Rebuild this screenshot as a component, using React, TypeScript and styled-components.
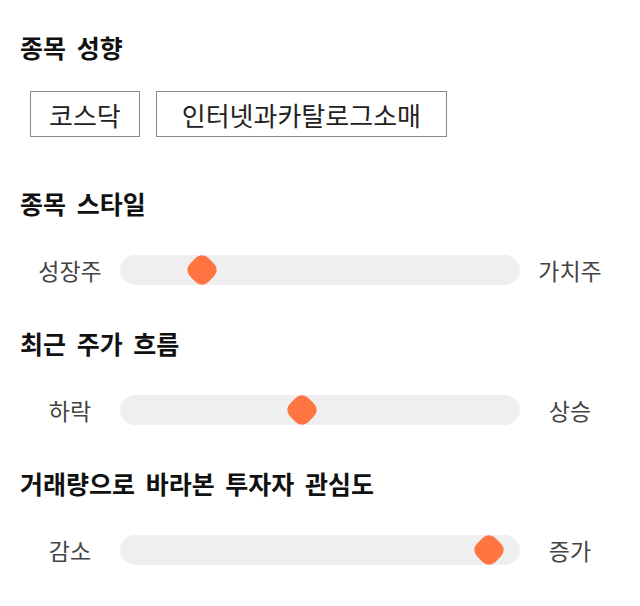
import React from "react";
import styled, { createGlobalStyle } from "styled-components";

const GlobalStyle = createGlobalStyle`
  body {
    margin: 0;
    background: #ffffff;
    font-family: "Noto Sans CJK KR", "Noto Sans", sans-serif;
  }
`;

const Page = styled.div`
  width: 640px;
  padding: 32px 20px 0 20px;
  box-sizing: border-box;
`;

const Section = styled.section<{ $after: number }>`
  margin-bottom: ${(p) => p.$after}px;
`;

const Heading = styled.h2<{ $gap: number }>`
  margin: 0 0 ${(p) => p.$gap}px 0;
  font-size: 25px;
  line-height: 30px;
  font-weight: 700;
  word-spacing: 5px;
  color: #111;
`;

const TagRow = styled.div`
  display: flex;
  gap: 16px;
  padding-left: 10px;
`;

const Tag = styled.button<{ $pad: number }>`
  height: 46px;
  padding: 0 ${(p) => p.$pad}px;
  border: 1px solid #8a8a8a;
  background: #fff;
  font-family: inherit;
  font-size: 26px;
  color: #222;
  box-sizing: border-box;
`;

const SliderRow = styled.div`
  display: grid;
  grid-template-columns: 100px 400px 100px;
  align-items: center;
  height: 30px;
`;

const SideLabel = styled.span`
  text-align: center;
  font-size: 23px;
  color: #444;
  line-height: 30px;
`;

const Track = styled.div`
  position: relative;
  height: 30px;
  border-radius: 15px;
  background: #efefef;
`;

const Thumb = styled.div`
  position: absolute;
  top: 2px;
  width: 26px;
  height: 26px;
  margin-left: -13px;
  background: #ff7541;
  border-radius: 9px;
  transform: rotate(45deg);
`;

type SliderProps = { left: string; right: string; pos: number };

const Slider = ({ left, right, pos }: SliderProps) => (
  <SliderRow>
    <SideLabel>{left}</SideLabel>
    <Track>
      <Thumb style={{ left: `${pos}px` }} />
    </Track>
    <SideLabel>{right}</SideLabel>
  </SliderRow>
);

const App = () => (
  <>
    <GlobalStyle />
    <Page>
      <Section $after={51}>
        <Heading $gap={29}>종목 성향</Heading>
        <TagRow>
          <Tag $pad={18}>코스닥</Tag>
          <Tag $pad={25}>인터넷과카탈로그소매</Tag>
        </TagRow>
      </Section>
      <Section $after={43}>
        <Heading $gap={37}>종목 스타일</Heading>
        <Slider left="성장주" right="가치주" pos={82} />
      </Section>
      <Section $after={43}>
        <Heading $gap={37}>최근 주가 흐름</Heading>
        <Slider left="하락" right="상승" pos={182} />
      </Section>
      <Section $after={0}>
        <Heading $gap={37}>거래량으로 바라본 투자자 관심도</Heading>
        <Slider left="감소" right="증가" pos={369} />
      </Section>
    </Page>
  </>
);

export default App;
